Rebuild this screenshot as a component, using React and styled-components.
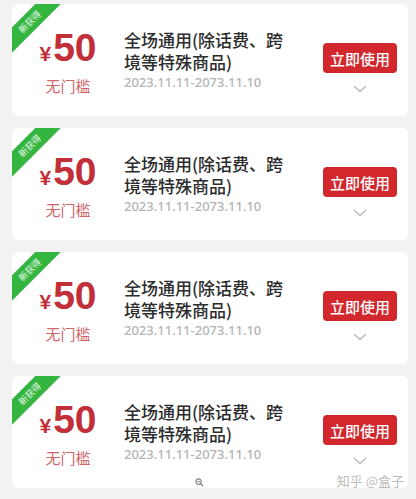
import React from 'react';
import styled, { createGlobalStyle } from 'styled-components';

const GlobalStyle = createGlobalStyle`
  html, body {
    margin: 0;
    padding: 0;
    background: #f2f2f2;
  }
  body {
    font-family: "Noto Sans CJK SC", "Noto Sans", sans-serif;
  }
`;

const coupons = [
  { id: 1, amount: '50', tag: '新获得', title: '全场通用(除话费、跨境等特殊商品)', date: '2023.11.11-2073.11.10' },
  { id: 2, amount: '50', tag: '新获得', title: '全场通用(除话费、跨境等特殊商品)', date: '2023.11.11-2073.11.10' },
  { id: 3, amount: '50', tag: '新获得', title: '全场通用(除话费、跨境等特殊商品)', date: '2023.11.11-2073.11.10' },
  { id: 4, amount: '50', tag: '新获得', title: '全场通用(除话费、跨境等特殊商品)', date: '2023.11.11-2073.11.10' },
];

export default function App() {
  return (
    <>
      <GlobalStyle />
      <Page>
        <List>
          {coupons.map((c) => (
            <Card key={c.id}>
              <Ribbon>{c.tag}</Ribbon>
              <Left>
                <Amount>
                  <Yen>¥</Yen>
                  {c.amount}
                </Amount>
                <Threshold>无门槛</Threshold>
              </Left>
              <Info>
                <Title>{c.title}</Title>
                <DateText>{c.date}</DateText>
              </Info>
              <Right>
                <UseButton>立即使用</UseButton>
                <Chevron width="14" height="8" viewBox="0 0 14 8">
                  <path d="M1 1 L7 6.5 L13 1" fill="none" stroke="#b8b8b8" strokeWidth="1.3" />
                </Chevron>
              </Right>
            </Card>
          ))}
        </List>
        <Magnifier width="9" height="9" viewBox="0 0 10 10">
          <circle cx="4" cy="4" r="3" fill="none" stroke="#777" strokeWidth="1.2" />
          <path d="M6.2 6.2 L9 9" stroke="#777" strokeWidth="1.4" />
          <path d="M2.5 4 H5.5" stroke="#777" strokeWidth="1" />
        </Magnifier>
        <Watermark>知乎 @盒子</Watermark>
      </Page>
    </>
  );
}

// style-components
const Page = styled.div`
  position: relative;
  width: 416px;
  height: 499px;
  overflow: hidden;
  padding: 4px 8px 0 12px;
  box-sizing: border-box;
`;

const List = styled.div`
  display: flex;
  flex-direction: column;
  gap: 12px;
`;

const Card = styled.div`
  position: relative;
  display: flex;
  align-items: flex-start;
  height: 112px;
  background: #fff;
  border-radius: 6px;
  overflow: hidden;
`;

const Ribbon = styled.div`
  position: absolute;
  left: -22px;
  top: 9px;
  width: 80px;
  height: 18px;
  line-height: 18px;
  background: #33b540;
  color: #e8f8e8;
  font-size: 9px;
  text-align: center;
  transform: rotate(-45deg);
`;

const Left = styled.div`
  width: 112px;
  padding-top: 24px;
  display: flex;
  flex-direction: column;
  align-items: center;
  flex-shrink: 0;
`;

const Amount = styled.div`
  font-family: "Liberation Sans", Arial, sans-serif;
  font-weight: bold;
  font-size: 39px;
  line-height: 40px;
  color: #c22f38;
  display: flex;
  align-items: baseline;
`;

const Yen = styled.span`
  font-size: 21px;
  margin-right: 2px;
`;

const Threshold = styled.div`
  margin-top: 2px;
  font-size: 15px;
  line-height: 20px;
  color: #d0676a;
`;

const Info = styled.div`
  flex: 1;
  padding-top: 25px;
  max-width: 172px;
`;

const Title = styled.div`
  font-size: 17px;
  font-weight: 500;
  line-height: 22px;
  color: #2c2c2c;
`;

const DateText = styled.div`
  font-family: "Noto Sans", sans-serif;
  font-size: 13px;
  font-weight: 500;
  line-height: 18px;
  color: #b4b4b4;
`;

const Right = styled.div`
  margin-left: auto;
  padding: 39px 11px 0 0;
  display: flex;
  flex-direction: column;
  align-items: center;
`;

const UseButton = styled.button`
  width: 74px;
  height: 30px;
  border: none;
  border-radius: 4px;
  background: #d2282d;
  color: #fff;
  font-family: "Noto Sans CJK SC", sans-serif;
  font-size: 15px;
  font-weight: 500;
  padding: 0;
`;

const Chevron = styled.svg`
  margin-top: 12px;
`;

const Magnifier = styled.svg`
  position: absolute;
  left: 195px;
  top: 478px;
`;

const Watermark = styled.div`
  position: absolute;
  right: 12px;
  top: 472px;
  font-size: 13px;
  line-height: 18px;
  color: #bcbcbc;
`;
